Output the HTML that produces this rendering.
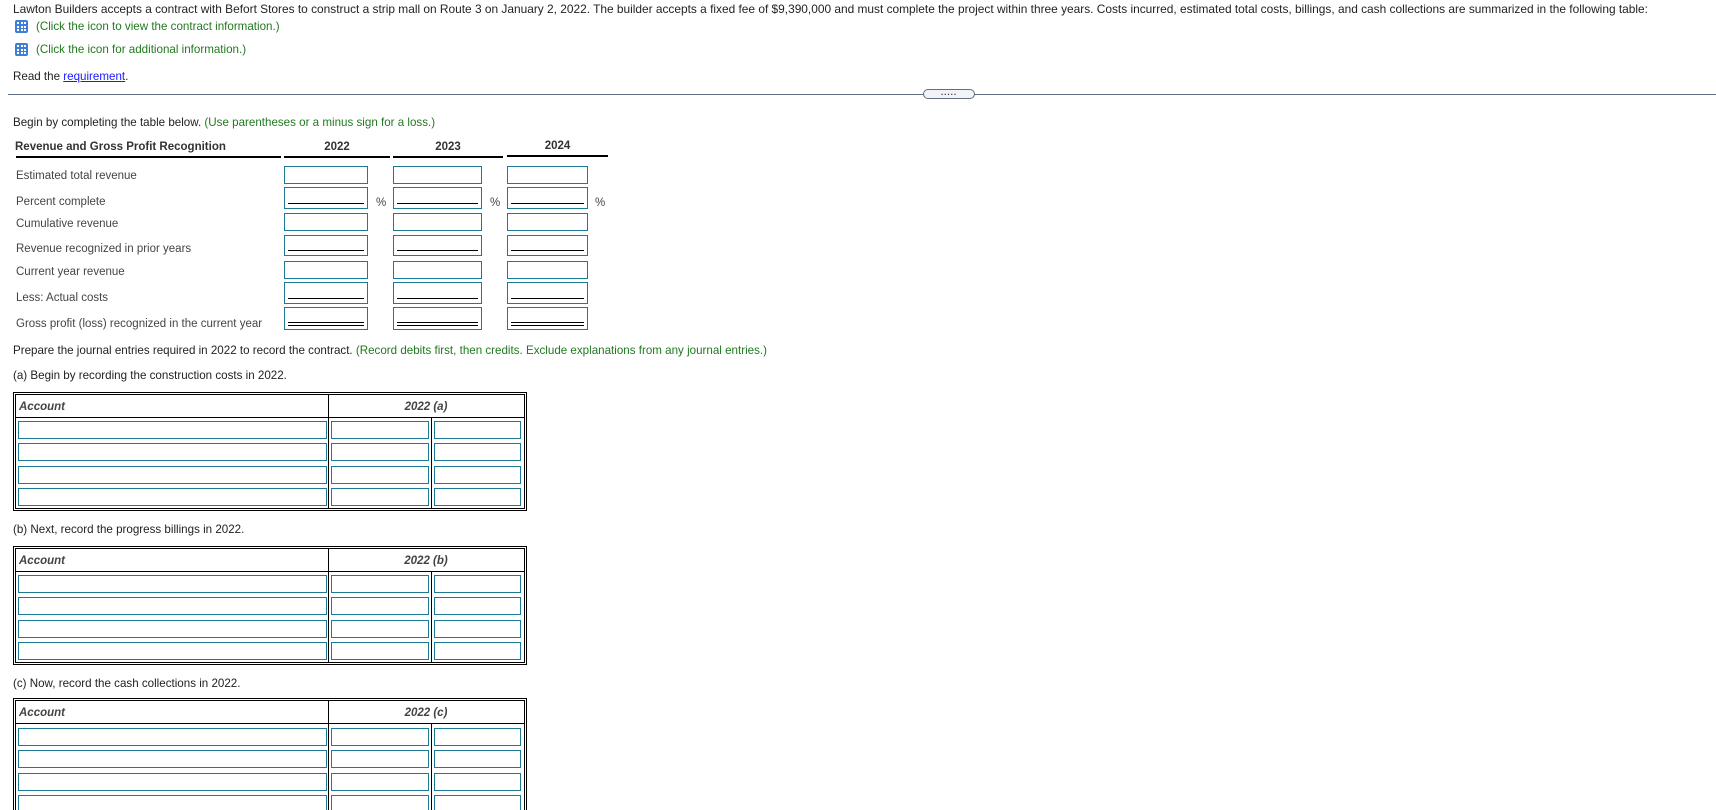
<!DOCTYPE html>
<html><head><meta charset="utf-8"><style>
html,body{margin:0;width:1716px;height:810px;overflow:hidden}
body{background:#fff;font-family:"Liberation Sans",Arial,sans-serif;color:#222;position:relative}
.a{position:absolute;white-space:nowrap}
.t{font-size:11.6px;line-height:14px}
.g{color:#1f7a1f}
.lab{font-size:11.5px;color:#444;line-height:14px}
.in{position:absolute;box-sizing:border-box;border:1.5px solid #1d7a96;background:#fff}
.ul::after{content:"";position:absolute;left:3px;right:3px;bottom:4px;border-bottom:1px solid #000}
.dl::after{content:"";position:absolute;left:3px;right:3px;bottom:3px;height:2px;border-top:1px solid #000;border-bottom:1px solid #000}
.icon{position:absolute;width:13px;height:13px;background:#3d7fd6;border-radius:2px}
.icon::before{content:"";position:absolute;left:2px;top:2px;width:9px;height:9px;background:
linear-gradient(#fff,#fff) 0 0/2px 2px,linear-gradient(#fff,#fff) 3.5px 0/2px 2px,linear-gradient(#fff,#fff) 7px 0/2px 2px,
linear-gradient(#fff,#fff) 0 3.5px/2px 2px,linear-gradient(#fff,#fff) 3.5px 3.5px/2px 2px,linear-gradient(#fff,#fff) 7px 3.5px/2px 2px,
linear-gradient(#fff,#fff) 0 7px/2px 2px,linear-gradient(#fff,#fff) 3.5px 7px/2px 2px,linear-gradient(#fff,#fff) 7px 7px/2px 2px;background-repeat:no-repeat}
.tbl{position:absolute;left:13px;width:514px;box-sizing:border-box;border:3px double #000}
.hl{position:absolute;background:#000}
.hd{position:absolute;font-size:11.5px;font-style:italic;font-weight:bold;color:#444}
</style></head><body>
<div class="a t" style="left:13px;top:2px;font-size:11.9px">Lawton Builders accepts a contract with Befort Stores to construct a strip mall on Route 3 on January 2, 2022. The builder accepts a fixed fee of $9,390,000 and must complete the project within three years. Costs incurred, estimated total costs, billings, and cash collections are summarized in the following table:</div>
<div class="icon" style="left:15px;top:20px"></div>
<div class="a t g" style="left:36px;top:20px">(Click the icon to view the contract information.)</div>
<div class="icon" style="left:15px;top:43px"></div>
<div class="a t g" style="left:36px;top:43px">(Click the icon for additional information.)</div>
<div class="a t" style="left:13px;top:70px">Read the <span style="color:#1a1aff;text-decoration:underline">requirement</span>.</div>
<div class="a" style="left:8px;top:94px;width:1708px;height:1px;background:#5f6f7f"></div>
<div class="a" style="left:923px;top:89px;width:52px;height:10px;box-sizing:border-box;border:1px solid #5f6f7f;border-radius:5px;background:#f1f3f6;font-size:8px;line-height:6px;text-align:center;color:#334;letter-spacing:1px;font-weight:bold">.....</div>
<div class="a t" style="left:13px;top:116px">Begin by completing the table below. <span class="g">(Use parentheses or a minus sign for a loss.)</span></div>
<div class="a" style="left:15px;top:141px;font-size:11.5px;font-weight:bold;color:#333">Revenue and Gross Profit Recognition</div>
<div class="a" style="left:16px;top:156px;width:265px;height:1.5px;background:#000"></div>
<div class="a" style="left:284px;top:156px;width:106px;height:1.5px;background:#000"></div>
<div class="a" style="left:393px;top:156px;width:110px;height:1.5px;background:#000"></div>
<div class="a" style="left:507px;top:155px;width:101px;height:1.5px;background:#000"></div>
<div class="a" style="left:284px;top:141px;width:106px;text-align:center;font-size:11.5px;font-weight:bold;color:#333">2022</div>
<div class="a" style="left:393px;top:141px;width:110px;text-align:center;font-size:11.5px;font-weight:bold;color:#333">2023</div>
<div class="a" style="left:507px;top:140px;width:101px;text-align:center;font-size:11.5px;font-weight:bold;color:#333">2024</div>
<div class="a lab" style="left:16px;top:169px">Estimated total revenue</div>
<div class="a lab" style="left:16px;top:195px">Percent complete</div>
<div class="a lab" style="left:16px;top:217px">Cumulative revenue</div>
<div class="a lab" style="left:16px;top:242px">Revenue recognized in prior years</div>
<div class="a lab" style="left:16px;top:265px">Current year revenue</div>
<div class="a lab" style="left:16px;top:291px">Less: Actual costs</div>
<div class="a lab" style="left:16px;top:317px">Gross profit (loss) recognized in the current year</div>
<div class="a lab" style="left:376px;top:196px">%</div>
<div class="a lab" style="left:490px;top:196px">%</div>
<div class="a lab" style="left:595px;top:196px">%</div>
<div class="in" style="left:284px;top:166px;width:84px;height:18px"></div>
<div class="in" style="left:393px;top:166px;width:89px;height:18px"></div>
<div class="in" style="left:507px;top:166px;width:81px;height:18px"></div>
<div class="in ul" style="left:284px;top:187px;width:84px;height:22px"></div>
<div class="in ul" style="left:393px;top:187px;width:89px;height:22px"></div>
<div class="in ul" style="left:507px;top:187px;width:81px;height:22px"></div>
<div class="in" style="left:284px;top:213px;width:84px;height:18px"></div>
<div class="in" style="left:393px;top:213px;width:89px;height:18px"></div>
<div class="in" style="left:507px;top:213px;width:81px;height:18px"></div>
<div class="in ul" style="left:284px;top:235px;width:84px;height:21px"></div>
<div class="in ul" style="left:393px;top:235px;width:89px;height:21px"></div>
<div class="in ul" style="left:507px;top:235px;width:81px;height:21px"></div>
<div class="in" style="left:284px;top:261px;width:84px;height:18px"></div>
<div class="in" style="left:393px;top:261px;width:89px;height:18px"></div>
<div class="in" style="left:507px;top:261px;width:81px;height:18px"></div>
<div class="in ul" style="left:284px;top:282px;width:84px;height:22px"></div>
<div class="in ul" style="left:393px;top:282px;width:89px;height:22px"></div>
<div class="in ul" style="left:507px;top:282px;width:81px;height:22px"></div>
<div class="in dl" style="left:284px;top:307px;width:84px;height:23px"></div>
<div class="in dl" style="left:393px;top:307px;width:89px;height:23px"></div>
<div class="in dl" style="left:507px;top:307px;width:81px;height:23px"></div>
<div class="a t" style="left:13px;top:344px">Prepare the journal entries required in 2022 to record the contract. <span class="g">(Record debits first, then credits. Exclude explanations from any journal entries.)</span></div>
<div class="a t" style="left:13px;top:369px">(a) Begin by recording the construction costs in 2022.</div>
<div class="a t" style="left:13px;top:523px">(b) Next, record the progress billings in 2022.</div>
<div class="a t" style="left:13px;top:677px">(c) Now, record the cash collections in 2022.</div>

<div class="tbl" style="top:392px;height:119px"></div>
<div class="hl" style="left:16px;top:417px;width:508px;height:1px"></div>
<div class="hl" style="left:328px;top:395px;width:1px;height:113px"></div>
<div class="hl" style="left:431px;top:418px;width:1px;height:90px"></div>
<div class="hd" style="left:19px;top:401px">Account</div>
<div class="hd" style="left:328px;top:401px;width:196px;text-align:center">2022 (a)</div>
<div class="in" style="left:18px;top:421px;width:309px;height:18px"></div><div class="in" style="left:331px;top:421px;width:98px;height:18px"></div><div class="in" style="left:434px;top:421px;width:87px;height:18px"></div>
<div class="in" style="left:18px;top:443px;width:309px;height:18px"></div><div class="in" style="left:331px;top:443px;width:98px;height:18px"></div><div class="in" style="left:434px;top:443px;width:87px;height:18px"></div>
<div class="in" style="left:18px;top:466px;width:309px;height:18px"></div><div class="in" style="left:331px;top:466px;width:98px;height:18px"></div><div class="in" style="left:434px;top:466px;width:87px;height:18px"></div>
<div class="in" style="left:18px;top:488px;width:309px;height:18px"></div><div class="in" style="left:331px;top:488px;width:98px;height:18px"></div><div class="in" style="left:434px;top:488px;width:87px;height:18px"></div>

<div class="tbl" style="top:546px;height:119px"></div>
<div class="hl" style="left:16px;top:571px;width:508px;height:1px"></div>
<div class="hl" style="left:328px;top:549px;width:1px;height:113px"></div>
<div class="hl" style="left:431px;top:572px;width:1px;height:90px"></div>
<div class="hd" style="left:19px;top:555px">Account</div>
<div class="hd" style="left:328px;top:555px;width:196px;text-align:center">2022 (b)</div>
<div class="in" style="left:18px;top:575px;width:309px;height:18px"></div><div class="in" style="left:331px;top:575px;width:98px;height:18px"></div><div class="in" style="left:434px;top:575px;width:87px;height:18px"></div>
<div class="in" style="left:18px;top:597px;width:309px;height:18px"></div><div class="in" style="left:331px;top:597px;width:98px;height:18px"></div><div class="in" style="left:434px;top:597px;width:87px;height:18px"></div>
<div class="in" style="left:18px;top:620px;width:309px;height:18px"></div><div class="in" style="left:331px;top:620px;width:98px;height:18px"></div><div class="in" style="left:434px;top:620px;width:87px;height:18px"></div>
<div class="in" style="left:18px;top:642px;width:309px;height:18px"></div><div class="in" style="left:331px;top:642px;width:98px;height:18px"></div><div class="in" style="left:434px;top:642px;width:87px;height:18px"></div>

<div class="tbl" style="top:698px;height:140px"></div>
<div class="hl" style="left:16px;top:723px;width:508px;height:1px"></div>
<div class="hl" style="left:328px;top:701px;width:1px;height:130px"></div>
<div class="hl" style="left:431px;top:724px;width:1px;height:100px"></div>
<div class="hd" style="left:19px;top:707px">Account</div>
<div class="hd" style="left:328px;top:707px;width:196px;text-align:center">2022 (c)</div>
<div class="in" style="left:18px;top:728px;width:309px;height:18px"></div><div class="in" style="left:331px;top:728px;width:98px;height:18px"></div><div class="in" style="left:434px;top:728px;width:87px;height:18px"></div>
<div class="in" style="left:18px;top:750px;width:309px;height:18px"></div><div class="in" style="left:331px;top:750px;width:98px;height:18px"></div><div class="in" style="left:434px;top:750px;width:87px;height:18px"></div>
<div class="in" style="left:18px;top:773px;width:309px;height:18px"></div><div class="in" style="left:331px;top:773px;width:98px;height:18px"></div><div class="in" style="left:434px;top:773px;width:87px;height:18px"></div>
<div class="in" style="left:18px;top:795px;width:309px;height:18px"></div><div class="in" style="left:331px;top:795px;width:98px;height:18px"></div><div class="in" style="left:434px;top:795px;width:87px;height:18px"></div>
</body></html>
